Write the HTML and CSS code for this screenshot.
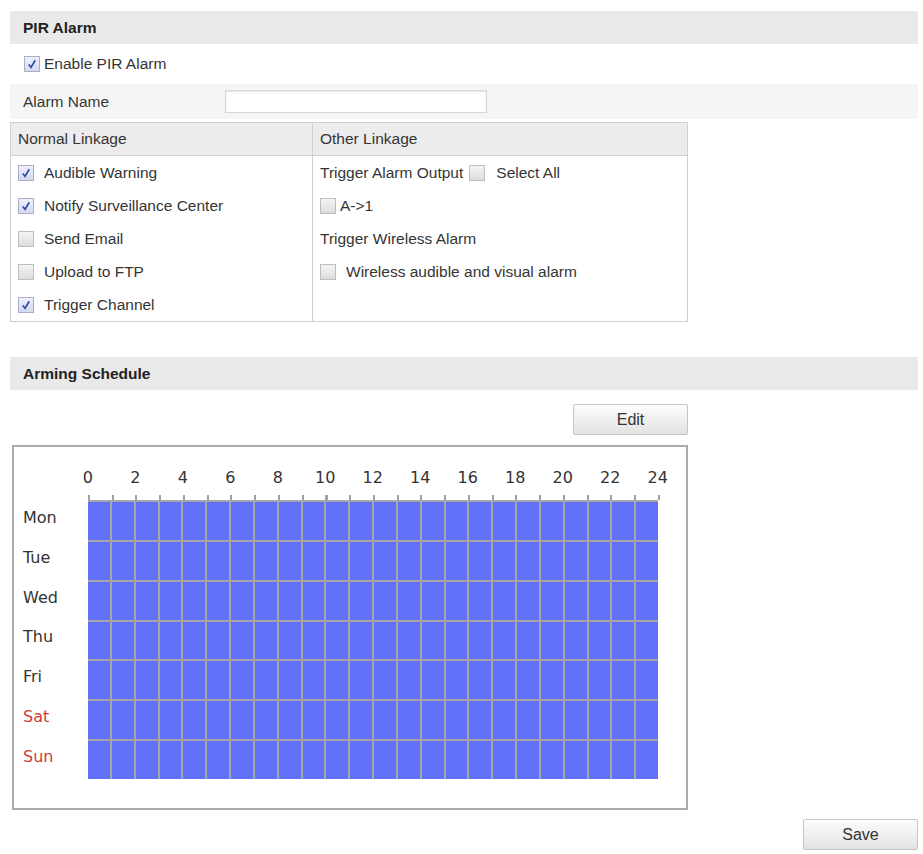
FILE: index.html
```html
<!DOCTYPE html>
<html>
    <head>
        <meta charset="UTF-8">
        <title>PIR Alarm</title>
        <link rel="stylesheet" href="styles.css">
    </head>
    <body>
        <div id="page">
            <div class="title">PIR Alarm</div>
            <div class="enable_row">
                <span class="cb on"><svg viewBox="0 0 15 15"><path d="M4 8 L6.5 11 L11 3.5"/></svg></span>
                <span>Enable PIR Alarm</span>
            </div>
            <div class="name_row">
                <label for="alarm_name">Alarm Name</label>
                <input id="alarm_name" type="text">
            </div>
            <div class="linkage">
                <div class="col normal">
                    <div class="col_head">Normal Linkage</div>
                    <div class="item"><span class="cb on"><svg viewBox="0 0 15 15"><path d="M4 8 L6.5 11 L11 3.5"/></svg></span>Audible Warning</div>
                    <div class="item"><span class="cb on"><svg viewBox="0 0 15 15"><path d="M4 8 L6.5 11 L11 3.5"/></svg></span>Notify Surveillance Center</div>
                    <div class="item"><span class="cb"></span>Send Email</div>
                    <div class="item"><span class="cb"></span>Upload to FTP</div>
                    <div class="item"><span class="cb on"><svg viewBox="0 0 15 15"><path d="M4 8 L6.5 11 L11 3.5"/></svg></span>Trigger Channel</div>
                </div>
                <div class="col other">
                    <div class="col_head">Other Linkage</div>
                    <div class="item">Trigger Alarm Output<span class="cb inline"></span><span class="select_all">Select All</span></div>
                    <div class="item"><span class="cb tight"></span>A-&gt;1</div>
                    <div class="item">Trigger Wireless Alarm</div>
                    <div class="item"><span class="cb wide"></span>Wireless audible and visual alarm</div>
                </div>
            </div>

            <div class="title schedule_title">Arming Schedule</div>
            <div class="button_bar edit_bar"><button class="btn">Edit</button></div>
            <div id="schedule">
                <div id="hours" class="hours"></div>
                <div class="ticks"></div>
                <div class="week">
                    <div class="days">
                        <div>Mon</div>
                        <div>Tue</div>
                        <div>Wed</div>
                        <div>Thu</div>
                        <div>Fri</div>
                        <div class="weekend">Sat</div>
                        <div class="weekend">Sun</div>
                    </div>
                    <div id="grid" class="grid"></div>
                </div>
            </div>
            <div class="button_bar save_bar"><button class="btn">Save</button></div>
        </div>
        <script>
            // hour labels every two hours, 0..24
            for (var h = 0; h <= 24; h += 2) {
                document.getElementById("hours").innerHTML += `<span>${h}</span>`;
            }
            // 7 days x 24 hours, all armed
            for (var i = 0; i < 7 * 24; i++) {
                document.getElementById("grid").innerHTML += "<div class='cell'></div>";
            }
        </script>
    </body>
</html>
```

FILE: styles.css
```css
body {
    margin: 0;
    background-color: white;
    font-family: "Liberation Sans", Arial, sans-serif;
    font-size: 15.5px;
    color: #353535;
}
#page {
    width: 908px;
    padding: 11px 0 0 10px;
}
.title {
    height: 33px;
    line-height: 33px;
    padding-left: 13px;
    background-color: #e9e9e9;
    font-weight: bold;
    color: #222;
}
.enable_row {
    display: flex;
    align-items: center;
    height: 40px;
    padding-left: 14px;
}
.enable_row .cb {
    margin-right: 4px;
}
.name_row {
    display: flex;
    align-items: center;
    height: 35px;
    padding-left: 13px;
    background-color: #f5f5f5;
}
.name_row label {
    width: 202px;
}
.name_row input {
    width: 258px;
    height: 19px;
    padding: 1px;
    border: 1px solid #d8d8d8;
    box-shadow: inset 0px 1px 2px rgba(0, 0, 0, 0.12);
    background-color: white;
}

/* checkbox */
.cb {
    display: inline-block;
    box-sizing: border-box;
    width: 16px;
    height: 16px;
    border: 1px solid #bdbdbd;
    background: linear-gradient(#f4f4f4, #dcdcdc);
    flex-shrink: 0;
}
.cb.on {
    background: linear-gradient(#eef0fa, #d4d9ef);
    border-color: #a9afc8;
}
.cb svg {
    display: block;
    width: 14px;
    height: 14px;
}
.cb path {
    fill: none;
    stroke: #2b48a6;
    stroke-width: 1.7;
}

.linkage {
    display: flex;
    width: 676px;
    margin-top: 3px;
    border: 1px solid #cfcfcf;
}
.col {
    display: flex;
    flex-direction: column;
}
.col.normal {
    width: 301px;
    border-right: 1px solid #cfcfcf;
}
.col.other {
    flex: 1;
}
.col_head {
    height: 32px;
    line-height: 32px;
    padding-left: 7px;
    background-color: #ececec;
    border-bottom: 1px solid #cfcfcf;
}
.item {
    display: flex;
    align-items: center;
    height: 33px;
    padding-left: 7px;
}
.normal .item .cb {
    margin-right: 10px;
}
.cb.inline {
    margin-left: 6px;
}
.select_all {
    margin-left: 11px;
}
.cb.tight {
    margin-right: 4px;
}
.cb.wide {
    margin-right: 10px;
}

.schedule_title {
    margin-top: 35px;
}
.button_bar {
    display: flex;
    justify-content: flex-end;
}
.edit_bar {
    width: 678px;
    margin-top: 14px;
}
.save_bar {
    margin-top: 9px;
}
.btn {
    width: 115px;
    height: 31px;
    border: 1px solid #c6c6c6;
    border-radius: 2px;
    background: linear-gradient(#fdfdfd, #e2e2e2);
    font-family: "Liberation Sans", Arial, sans-serif;
    font-size: 16px;
    color: #333;
}

/* arming schedule */
#schedule {
    width: 672px;
    margin: 10px 0 0 2px;
    padding: 21px 0 29px 0;
    border: 2px solid #ababab;
    font-family: "DejaVu Sans", Verdana, sans-serif;
    font-size: 16px;
    color: #333;
}
.hours {
    display: flex;
    margin-left: 50px;
}
.hours span {
    width: 47.5px;
    text-align: center;
    line-height: 20px;
}
.ticks {
    width: 572px;
    height: 5px;
    margin: 7px 0 0 74px;
    background: repeating-linear-gradient(to right, #a0a0a0 0px, #a0a0a0 2px, transparent 2px, transparent 23.75px);
}
.week {
    display: flex;
}
.days {
    display: flex;
    flex-direction: column;
    gap: 2px;
    width: 65px;
    padding: 2px 0 0 9px;
}
.days div {
    height: 37.8px;
    line-height: 32px;
}
.days .weekend {
    color: #d33a3a;
}
.grid {
    display: grid;
    grid-template-columns: repeat(24, 1fr);
    grid-template-rows: repeat(7, 1fr);
    gap: 2px;
    width: 570px;
    height: 277px;
    padding-top: 2px;
    background-color: #a6a6a6;
}
.cell {
    background-color: #6070f8;
}
```
